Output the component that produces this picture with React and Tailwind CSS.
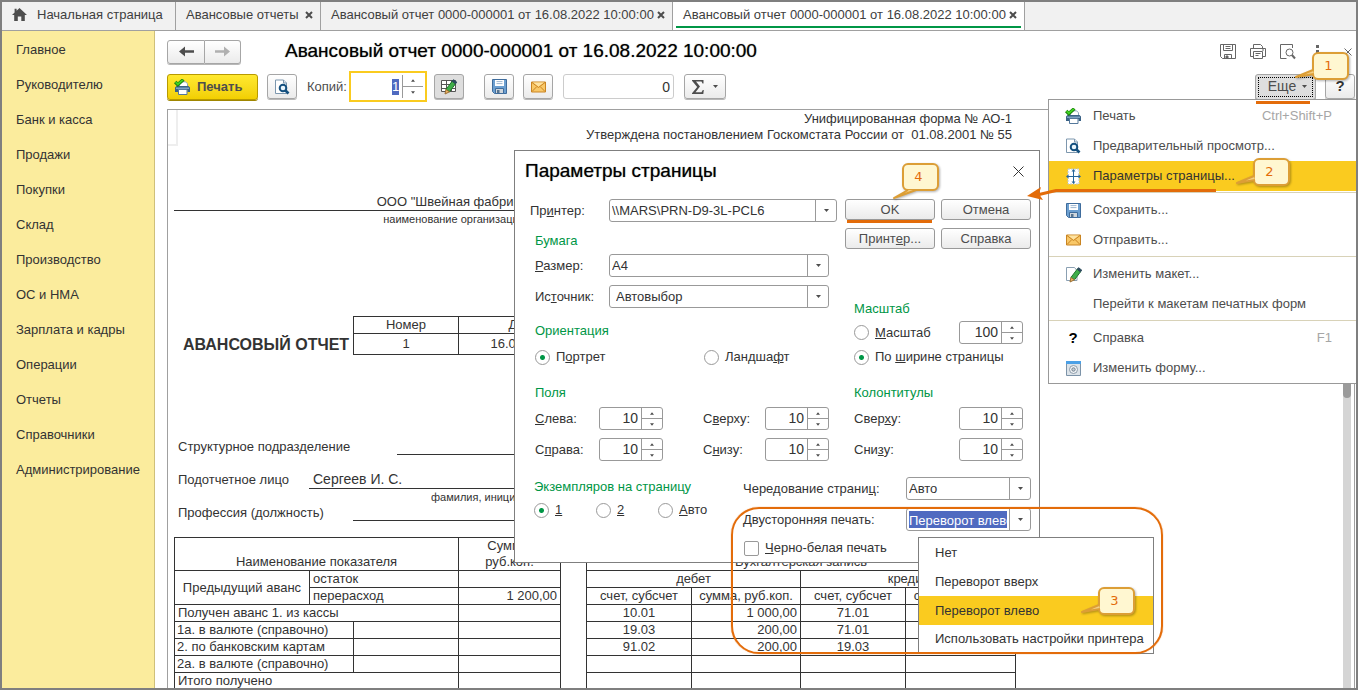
import React, { useState } from 'react';
import clsx from 'clsx';

const SECTIONS = [
  'Главное',
  'Руководителю',
  'Банк и касса',
  'Продажи',
  'Покупки',
  'Склад',
  'Производство',
  'ОС и НМА',
  'Зарплата и кадры',
  'Операции',
  'Отчеты',
  'Справочники',
  'Администрирование',
];

const DUPLEX = ['Нет', 'Переворот вверх', 'Переворот влево', 'Использовать настройки принтера'];

/* ---------- icons ---------- */

const HomeIcon = () => (
  <svg width="15" height="13" viewBox="0 0 15 13" fill="#4d4d4d">
    <path d="M7.5 0 15 7h-2.2v6H9.3V8.6H5.8V13H2.2V7H0l2.6-2.4V.8h2v1.9z" />
  </svg>
);

const PrintIcon = () => (
  <svg width="16" height="16" viewBox="0 0 16 16">
    <path d="M5.5 5V2.8h6l2 2V8h-8z" fill="#fff" stroke="#8ba4bb" />
    <path d="M1 8.5 2.5 7h12L16 8.5v4.6h-2.5V11H4v2.1H1z" fill="#3a6286" />
    <path d="M2 8.6h13v1.2H2z" fill="#8fb3d2" />
    <path d="M4.5 10.5h8.5v5H4.5z" fill="#fff" stroke="#54789b" />
    <path d="M1.2 3 3.8 5.6 9.4.6" fill="none" stroke="#1e7d10" strokeWidth="3.4" />
    <path d="M1.6 3.2 3.8 5.2 8.9.9" fill="none" stroke="#3ed41f" strokeWidth="1.8" />
  </svg>
);

const PreviewIcon = () => (
  <svg width="16" height="16" viewBox="0 0 16 16">
    <path d="M1.5 1h8l3 3v10.5h-11z" fill="#fff" stroke="#7d97ae" />
    <path d="M9.5 1v3h3" fill="#dfe8f0" stroke="#7d97ae" />
    <circle cx="9" cy="9" r="3.3" fill="#eaf6fd" stroke="#14507f" strokeWidth="2" />
    <path d="m11.5 11.5 3 3" stroke="#14507f" strokeWidth="2.6" />
  </svg>
);

const DiskIcon = () => (
  <svg width="15" height="15" viewBox="0 0 15 15">
    <path d="M.5.5h14v14h-12l-2-2z" fill="#6c9fd0" stroke="#3f6c9c" />
    <path d="M3 1h9v6H3z" fill="#fff" />
    <path d="M4.5 2.6h6M4.5 4.6h6" stroke="#9db7d0" />
    <path d="M3.5 9.5h8v5h-8z" fill="#cfd6dc" stroke="#3f6c9c" />
    <path d="M5 11h2.5v3H5z" fill="#56738f" />
  </svg>
);

const MailIcon = () => (
  <svg width="15" height="12" viewBox="0 0 15 12">
    <path d="M.5 1h14v10H.5z" fill="#f9c868" stroke="#c98422" />
    <path d="m2 1.5 5.500 4 5.500-4z" fill="#fee3a2" />
    <path d="m1 1.5 6.5 5 6.5-5M1 10.5l4.600-4.700M14 10.500 9.400 5.800" fill="none" stroke="#c98422" />
  </svg>
);

const Pencil = () => (
  <g>
    <path d="m12.2 3.2 3.3 2.6-6 8-3.6-2.3z" fill="#3fae49" stroke="#20742a" />
    <path d="m12.2 3.2 1.300-1.500 3.300 2.500-1.300 1.600z" fill="#2b4a5c" stroke="#2b4a5c" />
    <path d="m5.900 11.500 3.600 2.300L5 16z" fill="#eab665" stroke="#9b6f35" />
  </g>
);

const EditTableIcon = () => (
  <svg width="18" height="17" viewBox="0 0 18 17">
    <path d="M1.5 2.5h14v11h-14zM1.5 6.5h14M1.5 10.5h14M6.5 2.5v11M11.5 2.5v11" fill="#fff" stroke="#555" />
    <Pencil />
  </svg>
);

const EditSheetIcon = () => (
  <svg width="17" height="17" viewBox="0 0 17 17">
    <path d="M1.5 1.5h8l2.5 3v10H1.5z" fill="#fff" stroke="#8ba0b2" />
    <Pencil />
  </svg>
);

const PageSetupIcon = () => (
  <svg width="15" height="17" viewBox="0 0 15 17">
    <path d="M2 1h11v15H2z" fill="#fff" stroke="#b9c7d3" strokeDasharray="2 1" />
    <path d="M7.5 2v13M1 8.5h13" stroke="#26659a" />
    <path d="M7.5 1 9.500 3.500h-4zM7.500 16l2-2.500h-4zM0 8.500 2.500 6.500v4zM15 8.500l-2.500-2v4z" fill="#26659a" />
  </svg>
);

const FormIcon = () => (
  <svg width="15" height="15" viewBox="0 0 15 15">
    <path d="M.5 1h14v13.5H.5z" fill="#dce3e9" stroke="#7c93a8" />
    <path d="M0 0h15v3H0z" fill="#4ba0e6" />
    <circle cx="7.5" cy="8.5" r="4" fill="#f4f6f8" stroke="#8b9aa8" />
    <circle cx="7.5" cy="8.5" r="1.7" fill="#c3ccd4" stroke="#73828f" />
  </svg>
);

const ArrowIcon = ({ flip, color }) => (
  <svg width="15" height="11" viewBox="0 0 15 11" className={clsx(flip && 'rotate-180')}>
    <path d="M0 5.5 6 .5v3.700h9v2.600H6v3.700z" fill={color} />
  </svg>
);

const Caret = ({ className = 'text-[#4d4d4d]' }) => (
  <svg width="5" height="3" viewBox="0 0 5 3" className={className}>
    <path d="M0 0h5L2.5 3z" fill="currentColor" />
  </svg>
);

const SmallCross = () => (
  <svg width="8" height="8" viewBox="0 0 8 8">
    <path d="m1 1 6 6M7 1 1 7" stroke="#4d4d4d" strokeWidth="2" />
  </svg>
);

/* ---------- small controls ---------- */

const btn =
  'flex items-center justify-center rounded-[3px] border border-[#a6a6a6] bg-gradient-to-b from-white to-[#ebebeb] shadow-[0_1px_0_#b8b8b8]';

const ToolButton = ({ label, className, children }) => (
  <button type="button" aria-label={label} className={clsx(btn, 'h-[25px]', className)}>
    {children}
  </button>
);

const Combo = ({ id, options, className, selected, indent }) => (
  <div className={clsx('flex h-[23px] items-stretch rounded-[3px] border border-[#999] bg-white', className)}>
    <select
      id={id}
      className={clsx(
        'min-w-0 flex-1 appearance-none outline-none',
        selected ? 'm-[2px] bg-[#4f6ac0] text-white' : 'text-[#333]',
        indent ? 'pl-[6px]' : !selected && 'pl-[2px]'
      )}
    >
      {options.map((o) => (
        <option key={o}>{o}</option>
      ))}
    </select>
    <span className="flex w-[21px] items-center justify-center border-l border-[#999]">
      <Caret />
    </span>
  </div>
);

const Spin = ({ id, label, value }) => (
  <div className="flex h-[23px] w-16 shrink-0 rounded-[3px] border border-[#999] bg-white">
    <input
      id={id}
      aria-label={label}
      defaultValue={value}
      className="w-0 flex-1 pr-[3px] text-right text-[14px] text-[#333] outline-none"
    />
    <span className="flex w-[21px] flex-col border-l border-[#999]">
      <button type="button" aria-label="Больше" className="flex flex-1 items-center justify-center border-b border-[#999]">
        <Caret className="w-[4px] rotate-180 text-[#4d4d4d]" />
      </button>
      <button type="button" aria-label="Меньше" className="flex flex-1 items-center justify-center">
        <Caret className="w-[4px] text-[#4d4d4d]" />
      </button>
    </span>
  </div>
);

const Radio = ({ name, checked, className, children }) => (
  <label className={clsx('flex h-4 items-center gap-[6px]', className)}>
    <input
      type="radio"
      name={name}
      defaultChecked={checked}
      className="size-[15px] shrink-0 appearance-none rounded-full border border-[#999] bg-white checked:bg-[radial-gradient(circle,#009646_2px,#fff_3px)]"
    />
    <span>{children}</span>
  </label>
);

const GroupTitle = ({ className, children }) => (
  <h3 className={clsx('h-4 leading-4 text-[#009646]', className)}>{children}</h3>
);

/* numbered balloon, the tail path is drawn relative to the box */
const Callout = ({ n, className, tail }) => (
  <div className={clsx('pointer-events-none absolute z-30 h-7 w-[37px]', className)}>
    <svg width="37" height="28" className="absolute inset-0 overflow-visible drop-shadow-[1px_1px_1px_#0000004d]">
      <rect x="1" y="1" width="35" height="26" rx="5" fill="#fff7d1" stroke="#dc9e36" strokeWidth="2" />
      <path d={tail} fill="#f3cf86" stroke="#dc9e36" strokeWidth="2" strokeLinejoin="round" />
    </svg>
    <span className="relative block pr-1 text-center font-['DejaVu_Sans',sans-serif] text-[13px] leading-7 text-[#e36c0a]">
      {n}
    </span>
  </div>
);

const SIDE_TAIL = 'M1 18-16 25 2 22';

/* ---------- page parts ---------- */

const Tab = ({ active, closable, className, children }) => (
  <div className={clsx('flex flex-col border-r border-[#a0a0a0]', active && 'bg-white', className)}>
    <div className="flex flex-1 items-center justify-between pt-px pr-[7px] pl-[10px]">
      <button type="button" className="flex items-center gap-[10px] whitespace-nowrap">{children}</button>
      {closable && (
        <button type="button" aria-label="Закрыть">
          <SmallCross />
        </button>
      )}
    </div>
    <div className={clsx('mx-[3px] mb-[2px] h-[2px]', active && 'bg-[#009646]')} />
  </div>
);

const Header = () => (
  <div className="flex h-[25px] items-center pr-1 pl-3">
    <div className="flex">
      <button type="button" aria-label="Назад" className={clsx(btn, 'h-[24px] w-[38px] rounded-r-none')}>
        <ArrowIcon color="#4d4d4d" />
      </button>
      <button type="button" aria-label="Вперед" className={clsx(btn, 'h-[24px] w-[36px] rounded-l-none border-l-0')}>
        <ArrowIcon flip color="#b0b0b0" />
      </button>
    </div>
    <h1 className="ml-[44px] flex-1 text-[19px] whitespace-nowrap text-black [text-shadow:0_0_1px_#0009]">
      Авансовый отчет 0000-000001 от 16.08.2022 10:00:00
    </h1>
    <div className="flex items-center text-[#666]">
      <button type="button" aria-label="Сохранить" className="mr-[14px]">
        <svg width="16" height="15" viewBox="0 0 16 15" fill="none" stroke="currentColor">
          <path d="M.5.5h15v14h-13l-2-2zM3.5.5v6h9v-6M5.500 2.500h5M5.500 4.500h5M4.500 14.500v-4h7v4" />
          <path d="M6 12h2v2H6z" fill="currentColor" />
        </svg>
      </button>
      <button type="button" aria-label="Печать" className="mr-[14px]">
        <svg width="16" height="15" viewBox="0 0 16 15" fill="none" stroke="currentColor">
          <path d="M3.5 4.500v-4h7l2 2v2M3.500 12.500h-3v-8h15v8h-3M3.500 7.500h9v7h-9zM5.500 9.500h5M5.500 11.500h3M12 6h2" />
        </svg>
      </button>
      <button type="button" aria-label="Предварительный просмотр" className="mr-[20px]">
        <svg width="16" height="16" viewBox="0 0 16 16" fill="none" stroke="currentColor">
          <path d="M12.5 4V.5H.5v14h6" />
          <circle cx="9.5" cy="8.5" r="3.5" />
          <path d="m12 11 3 3.500" strokeWidth="2" />
        </svg>
      </button>
      <button type="button" aria-label="Дополнительно" className="mr-[25px]">
        <svg width="3" height="13" viewBox="0 0 3 13" fill="currentColor">
          <path d="M0 0h3v3H0zM0 5h3v3H0zM0 10h3v3H0z" />
        </svg>
      </button>
      <button type="button" aria-label="Закрыть">
        <svg width="8" height="8" viewBox="0 0 8 8" stroke="currentColor">
          <path d="m.5.5 7 7M7.500.500l-7 7" />
        </svg>
      </button>
    </div>
  </div>
);

const Toolbar = () => (
  <div className="mt-[7px] flex h-[31px] items-center pl-3 text-[#4d4d4d]">
    <button
      type="button"
      className="flex h-[26px] w-[91px] items-center gap-[7px] rounded-[3px] border border-[#b89a00] bg-gradient-to-b from-[#ffe92e] to-[#f2cf00] pl-[6px] text-[13px] font-bold text-[#4d4d4d] shadow-[0_1px_0_#a08600]"
    >
      <PrintIcon />
      Печать
    </button>
    <ToolButton label="Просмотр" className="ml-[9px] w-[30px]">
      <PreviewIcon />
    </ToolButton>
    <label htmlFor="copies" className="ml-[10px] w-[42px] whitespace-nowrap">
      Копий:
    </label>
    <div className="flex h-[31px] w-[78px] items-stretch border-2 border-[#facb1f] bg-white p-[2px]">
      <span className="flex flex-1 items-center justify-end pr-[3px]">
        <input id="copies" defaultValue="1" className="h-4 w-[7px] bg-[#4f6ac0] text-[13px] text-white outline-none" />
      </span>
      <span className="flex w-[21px] flex-col border-l border-[#999]">
        <button type="button" aria-label="Больше" className="flex flex-1 items-center justify-center border-b border-[#999]">
          <Caret className="w-[4px] rotate-180" />
        </button>
        <button type="button" aria-label="Меньше" className="flex flex-1 items-center justify-center">
          <Caret className="w-[4px]" />
        </button>
      </span>
    </div>
    <ToolButton label="Редактирование" className="ml-[7px] w-[30px] bg-[#dedede] bg-none">
      <EditTableIcon />
    </ToolButton>
    <ToolButton label="Сохранить" className="ml-[20px] w-[30px]">
      <DiskIcon />
    </ToolButton>
    <ToolButton label="Отправить" className="ml-[9px] w-[30px]">
      <MailIcon />
    </ToolButton>
    <input
      aria-label="Сумма"
      defaultValue="0"
      className="ml-[10px] h-[25px] w-[111px] rounded-[3px] border border-[#ccc] pr-[3px] text-right text-[14px] text-[#333]"
    />
    <ToolButton label="Сумма ячеек" className="ml-[10px] w-[42px] gap-[9px]">
      <svg width="12" height="14" viewBox="0 0 12 14" fill="#4d4d4d">
        <path d="M0 0h11.5v3.500h-1L9.500 1.600H4l4 5-4.500 5.600h6L10.800 10h1L11.300 14H0v-.8L5.200 7 0 .8z" />
      </svg>
      <Caret />
    </ToolButton>
    <div className="flex-1" />
    <div className="relative">
      <button type="button" className={clsx(btn, 'h-[26px] w-[61px] bg-[#dedede] bg-none p-[2px]')}>
        <span className="flex h-full w-full items-center justify-center gap-[6px] border border-dotted border-black pl-1 text-[14px]">
          Еще
          <Caret />
        </span>
      </button>
      <div className="absolute top-[27px] left-px z-30 h-[3px] w-[54px] bg-[#e36c0a]" />
      <Callout n="1" className="-top-[22px] left-[57px]" tail={SIDE_TAIL} />
    </div>
    <ToolButton label="Справка" className="mr-px ml-[9px] w-[30px] text-[15px] font-bold text-[#333]">
      ?
    </ToolButton>
  </div>
);

const line = 'border border-[#333]';

const LeftTable = () => (
  <table className="w-[387px] table-fixed border-collapse leading-4">
    <colgroup>
      <col className="w-[135px]" />
      <col className="w-[44px]" />
      <col className="w-[105px]" />
      <col className="w-[102px]" />
    </colgroup>
    <tbody>
      <tr className="h-[33px]">
        <th colSpan={3} className={clsx(line, 'p-0 align-bottom font-normal')}>Наименование показателя</th>
        <th className={clsx(line, 'p-0 align-bottom font-normal')}>
          Сумма,
          <br />
          руб.коп.
        </th>
      </tr>
      <tr className="h-[17px]">
        <td rowSpan={2} className={clsx(line, 'p-0 text-center')}>Предыдущий аванс</td>
        <td colSpan={2} className={clsx(line, 'p-0 pl-[3px]')}>остаток</td>
        <td className={clsx(line, 'p-0')} />
      </tr>
      <tr className="h-[17px]">
        <td colSpan={2} className={clsx(line, 'p-0 pl-[3px]')}>перерасход</td>
        <td className={clsx(line, 'p-0 pr-[3px] text-right')}>1 200,00</td>
      </tr>
      <tr className="h-[17px]">
        <td colSpan={3} className={clsx(line, 'p-0 pl-[3px]')}>Получен аванс 1. из кассы</td>
        <td className={line} />
      </tr>
      {['1а. в валюте (справочно)', '2. по банковским картам', '2а. в валюте (справочно)'].map((t) => (
        <tr key={t} className="h-[17px]">
          <td colSpan={2} className={clsx(line, 'p-0 pl-[2px]')}>{t}</td>
          <td className={line} />
          <td className={line} />
        </tr>
      ))}
      <tr className="h-[17px]">
        <td colSpan={3} className={clsx(line, 'p-0 pl-[3px]')}>Итого получено</td>
        <td className={line} />
      </tr>
    </tbody>
  </table>
);

const ENTRIES = [
  ['10.01', '1 000,00', '71.01', ''],
  ['19.03', '200,00', '71.01', ''],
  ['91.02', '200,00', '19.03', ''],
  ['', '', '', ''],
  ['', '', '', ''],
];

const RightTable = () => (
  <table className="w-[430px] table-fixed border-collapse leading-4">
    <colgroup>
      <col className="w-[105px]" />
      <col className="w-[109px]" />
      <col className="w-[105px]" />
      <col className="w-[110px]" />
    </colgroup>
    <tbody>
      <tr className="h-[33px]">
        <th colSpan={4} className={clsx(line, 'p-0 align-bottom font-normal')}>Бухгалтерская запись</th>
      </tr>
      <tr className="h-[17px]">
        <th colSpan={2} className={clsx(line, 'p-0 font-normal')}>дебет</th>
        <th colSpan={2} className={clsx(line, 'p-0 font-normal')}>кредит</th>
      </tr>
      <tr className="h-[17px] whitespace-nowrap">
        <th className={clsx(line, 'p-0 font-normal')}>счет, субсчет</th>
        <th className={clsx(line, 'p-0 font-normal')}>сумма, руб.коп.</th>
        <th className={clsx(line, 'p-0 font-normal')}>счет, субсчет</th>
        <th className={clsx(line, 'p-0 font-normal')}>сумма, руб.коп.</th>
      </tr>
      {ENTRIES.map((row, i) => (
        <tr key={i} className="h-[17px]">
          {row.map((cell, j) => (
            <td key={j} className={clsx(line, 'p-0', j % 2 ? 'pr-[3px] text-right' : 'text-center')}>
              {cell}
            </td>
          ))}
        </tr>
      ))}
    </tbody>
  </table>
);

const Sheet = () => (
  <div className="min-w-0 flex-1 overflow-hidden">
    <div className="flex">
      <div className="h-9 w-[10px] shrink-0 border-r-2 border-b-2 border-[#eee]" />
      <div className="w-[834px] shrink-0 pt-px text-right leading-4">
        <p>Унифицированная форма № АО-1</p>
        <p className="whitespace-pre">Утверждена постановлением Госкомстата России от  01.08.2001 № 55</p>
      </div>
    </div>
    <div className="ml-[6px] w-[842px]">
      <div className="mt-[48px] w-[560px] text-center">
        <p className="border-b border-[#333] leading-4">ООО "Швейная фабрика"</p>
        <p className="text-[11px] leading-4">наименование организации</p>
      </div>
      <div className="mt-[89px] flex items-end">
        <h2 className="w-[179px] pl-[9px] text-[16px] leading-5 font-bold whitespace-nowrap">АВАНСОВЫЙ ОТЧЕТ</h2>
        <table className="w-[235px] table-fixed border-collapse text-center leading-4">
          <colgroup>
            <col className="w-[105px]" />
            <col className="w-[129px]" />
          </colgroup>
          <tbody>
            <tr className="h-[17px]">
              <th className={clsx(line, 'p-0 font-normal')}>Номер</th>
              <th className={clsx(line, 'p-0 font-normal')}>Дата</th>
            </tr>
            <tr className="h-[21px]">
              <td className={clsx(line, 'p-0')}>1</td>
              <td className={clsx(line, 'p-0')}>16.08.2022</td>
            </tr>
          </tbody>
        </table>
      </div>
      <div className="mt-[84px] flex h-4 items-center">
        <span className="w-[223px] pl-1">Структурное подразделение</span>
        <span className="h-full flex-1 border-b border-[#333]" />
      </div>
      <div className="mt-[16px] flex h-[18px] items-center">
        <span className="w-[135px] pl-1">Подотчетное лицо</span>
        <span className="h-full flex-1 border-b border-[#333] pl-1 text-[14px] leading-4">Сергеев И. С.</span>
      </div>
      <p className="pl-[257px] text-[11px] leading-4">фамилия, инициалы</p>
      <div className="flex h-4 items-center">
        <span className="w-[179px] pl-1">Профессия (должность)</span>
        <span className="h-full flex-1 border-b border-[#333]" />
      </div>
      <div className="mt-[16px] flex items-start gap-[25px]">
        <LeftTable />
        <RightTable />
      </div>
    </div>
  </div>
);

const MenuItem = ({ icon, hint, active, children }) => (
  <li>
    <button type="button" className={clsx('flex h-[30px] w-full items-center pr-6', active && 'bg-[#facb1f] text-[#333]')}>
      <span className="flex w-[44px] items-center justify-center pl-1">{icon}</span>
      <span className="flex-1 text-left">{children}</span>
      {hint && <span className="text-[#a6a6a6]">{hint}</span>}
    </button>
  </li>
);

const MenuLine = () => <li className="mt-px mb-[2px] h-px bg-[#d8d2b8]" />;

const MoreMenu = () => (
  <div className="absolute top-[97px] right-0 z-20 w-[308px] border border-r-0 border-[#999] bg-white text-[#4d4d4d]">
    <ul className="pt-px">
      <MenuItem icon={<PrintIcon />} hint="Ctrl+Shift+P">Печать</MenuItem>
      <MenuItem icon={<PreviewIcon />}>Предварительный просмотр...</MenuItem>
      <MenuItem icon={<PageSetupIcon />} active>Параметры страницы...</MenuItem>
      <MenuLine />
      <MenuItem icon={<DiskIcon />}>Сохранить...</MenuItem>
      <MenuItem icon={<MailIcon />}>Отправить...</MenuItem>
      <MenuLine />
      <MenuItem icon={<EditSheetIcon />}>Изменить макет...</MenuItem>
      <MenuItem>Перейти к макетам печатных форм</MenuItem>
      <MenuLine />
      <MenuItem icon={<span className="text-[15px] font-bold text-black">?</span>} hint="F1">Справка</MenuItem>
      <MenuItem icon={<FormIcon />}>Изменить форму...</MenuItem>
    </ul>
    <svg width="190" height="16" viewBox="0 0 190 16" className="absolute top-[86px] -left-[22px]">
      <path d="M189 4.500H29L10 9" fill="none" stroke="#e36c0a" strokeWidth="3" />
      <path d="M0 10 14 1l-2 7 4 6z" fill="#e36c0a" />
    </svg>
    <Callout n="2" className="top-[58px] left-[204px]" tail={SIDE_TAIL} />
  </div>
);

const Field = ({ id, label, value, className, labelClass }) => (
  <div className={clsx('flex h-[23px] items-center', className)}>
    <label htmlFor={id} className={labelClass}>{label}</label>
    <Spin id={id} value={value} />
  </div>
);

const dialogBtn =
  'flex h-[21px] w-full items-center justify-center rounded-[3px] border border-[#999] bg-gradient-to-b from-white to-[#ebebeb] text-[#4d4d4d]';

const PageDialog = () => (
  <div
    role="dialog"
    aria-label="Параметры страницы"
    className="absolute top-[148px] left-[512px] z-10 w-[526px] border border-[#7f7f7f] bg-white pb-[6px] text-[#333]"
  >
    <div className="flex h-[40px] items-center justify-between pr-[15px] pl-[10px]">
      <h2 className="text-[19px] text-black [text-shadow:0_0_1px_#0009]">Параметры страницы</h2>
      <button type="button" aria-label="Закрыть">
        <svg width="11" height="11" viewBox="0 0 11 11" stroke="#333">
          <path d="m.5.5 10 10M10.500.500l-10 10" />
        </svg>
      </button>
    </div>

    <div className="flex gap-2 pt-[8px] pr-[8px] pl-[15px]">
      <div className="flex-1">
        <div className="flex items-center">
          <label htmlFor="printer" className="w-[79px]">Пр<u>и</u>нтер:</label>
          <Combo id="printer" options={['\\\\MARS\\PRN-D9-3L-PCL6']} className="flex-1" />
        </div>
        <div className="mr-2 pl-[5px]">
          <GroupTitle className="mt-[11px]">Бумага</GroupTitle>
          <div className="mt-[5px] flex items-center">
            <label htmlFor="size" className="w-[74px]"><u>Р</u>азмер:</label>
            <Combo id="size" options={['A4']} className="flex-1" />
          </div>
          <div className="mt-2 flex items-center">
            <label htmlFor="source" className="w-[74px]">Ис<u>т</u>очник:</label>
            <Combo id="source" options={['Автовыбор']} className="flex-1" indent />
          </div>
          <GroupTitle className="mt-[15px]">Ориентация</GroupTitle>
          <div className="mt-[10px] flex">
            <Radio name="orient" checked className="w-[169px]">П<u>о</u>ртрет</Radio>
            <Radio name="orient">Ландша<u>ф</u>т</Radio>
          </div>
          <GroupTitle className="mt-[20px]">Поля</GroupTitle>
          <div className="mt-[6px] flex justify-between">
            <Field id="ml" value="10" labelClass="w-[64px]" label={<><u>С</u>лева:</>} />
            <Field id="mt" value="10" labelClass="w-[62px]" label={<>С<u>в</u>ерху:</>} />
          </div>
          <div className="mt-2 flex justify-between">
            <Field id="mr" value="10" labelClass="w-[64px]" label={<>С<u>п</u>рава:</>} />
            <Field id="mb" value="10" labelClass="w-[62px]" label={<>С<u>н</u>изу:</>} />
          </div>
        </div>
      </div>

      <div className="w-[186px]">
        <div className="relative grid grid-cols-2 gap-x-[6px] gap-y-2">
          <button type="button" className={dialogBtn}>OK</button>
          <button type="button" className={dialogBtn}>Отмена</button>
          <button type="button" className={dialogBtn}>Принт<u>е</u>р...</button>
          <button type="button" className={dialogBtn}>Справка</button>
          <div className="absolute top-[21px] left-[2px] h-[3px] w-[85px] bg-[#e36c0a]" />
          <Callout n="4" className="-top-[36px] left-[57px]" tail="M6 27-8 35 14 27" />
        </div>
        <div className="pr-[8px] pl-[9px]">
          <GroupTitle className="mt-[52px]">Масштаб</GroupTitle>
          <div className="mt-[4px] flex items-center justify-between">
            <Radio name="scale"><u>М</u>асштаб</Radio>
            <Spin label="Масштаб, %" value="100" />
          </div>
          <Radio name="scale" checked className="mt-[5px] whitespace-nowrap">По <u>ш</u>ирине страницы</Radio>
          <GroupTitle className="mt-[20px]">Колонтитулы</GroupTitle>
          <Field id="ht" value="10" className="mt-[6px] justify-between" label={<>Свер<u>х</u>у:</>} />
          <Field id="hb" value="10" className="mt-2 justify-between" label={<>Сни<u>з</u>у:</>} />
        </div>
      </div>
    </div>

    <div className="flex pt-[16px] pr-[8px] pl-[19px]">
      <div className="flex-1 pt-[2px]">
        <GroupTitle>Экземпляров на страницу</GroupTitle>
        <div className="mt-[7px] flex">
          <Radio name="percopy" checked className="w-[62px]"><u>1</u></Radio>
          <Radio name="percopy" className="w-[62px]"><u>2</u></Radio>
          <Radio name="percopy"><u>А</u>вто</Radio>
        </div>
      </div>
      <div className="w-[288px]">
        <div className="flex items-center justify-between">
          <label htmlFor="order">Чередование страни<u>ц</u>:</label>
          <Combo id="order" options={['Авто']} className="w-[125px]" />
        </div>
        <div className="mt-2 flex items-center justify-between">
          <label htmlFor="duplex">Двусторонняя печать:</label>
          <Combo id="duplex" options={['Переворот влево']} className="w-[125px]" selected />
        </div>
        <label className="mt-[9px] flex h-4 items-center gap-[6px] pl-px">
          <input type="checkbox" className="size-[15px] appearance-none rounded-[2px] border border-[#999] bg-white" />
          <span><u>Ч</u>ерно-белая печать</span>
        </label>
      </div>
    </div>
  </div>
);

const DuplexList = () => {
  const [current, setCurrent] = useState('Переворот влево');
  return (
    <div className="absolute top-[535px] left-[916px] z-20 w-[236px] border border-[#7f7f7f] bg-white text-[#333]">
      {DUPLEX.map((d) => (
        <button
          key={d}
          type="button"
          onClick={() => setCurrent(d)}
          className={clsx(
            'block h-[29px] w-full pl-4 text-left whitespace-nowrap nth-4:h-[28px]',
            d === current && 'bg-[#facb1f]'
          )}
        >
          {d}
        </button>
      ))}
      <Callout n="3" className="top-[49px] left-[179px]" tail={SIDE_TAIL} />
    </div>
  );
};

export default function App() {
  return (
    <div className="relative flex h-screen flex-col overflow-hidden border-2 border-[#7f7f7f] bg-white font-['Liberation_Sans',Arial,sans-serif] text-[13px] text-[#333]">
      <nav className="flex h-[29px] shrink-0 border-b border-[#a0a0a0] bg-[#f1f1f1] text-[#404040]">
        <Tab className="w-[174px]">
          <HomeIcon />
          Начальная страница
        </Tab>
        <Tab closable className="w-[145px]">Авансовые отчеты</Tab>
        <Tab closable className="w-[352px]">Авансовый отчет 0000-000001 от 16.08.2022 10:00:00</Tab>
        <Tab closable active className="w-[352px]">Авансовый отчет 0000-000001 от 16.08.2022 10:00:00</Tab>
      </nav>

      <div className="flex min-h-0 flex-1">
        <aside className="w-[153px] shrink-0 border-r border-[#cfc07a] bg-[#fbec9d] pt-px">
          {SECTIONS.map((s) => (
            <a key={s} href="#" className="flex h-[35px] items-center pl-[14px]">
              {s}
            </a>
          ))}
        </aside>

        <main className="flex min-w-0 flex-1 flex-col pt-[8px]">
          <Header />
          <Toolbar />
          <div className="mt-[7px] mr-px ml-3 flex min-h-0 flex-1 border-t border-r border-l border-[#a0a0a0]">
            <Sheet />
            <div className="mr-[3px] w-2 bg-[#d5d5d5]">
              <div className="h-[288px] rounded-b-[4px] bg-[#9b9b9b]" />
            </div>
          </div>
        </main>
      </div>

      <PageDialog />
      <MoreMenu />
      <DuplexList />
      <div className="pointer-events-none absolute top-[505px] left-[729px] z-20 h-[147px] w-[432px] rounded-[28px] border-2 border-[#e36c0a] shadow-[0_0_1px_#e36c0a]" />
    </div>
  );
}
